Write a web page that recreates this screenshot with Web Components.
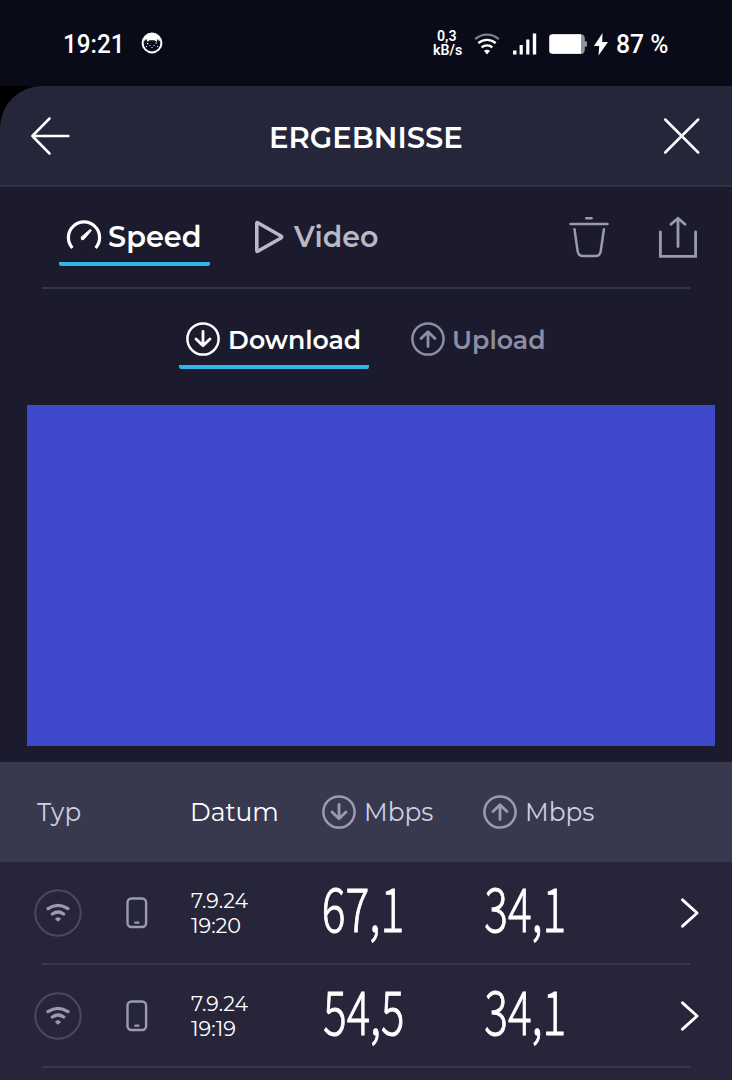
<!DOCTYPE html>
<html lang="de">
<head>
<meta charset="utf-8">
<meta name="viewport" content="width=device-width">
<title>Ergebnisse</title>
<style>
  body {
    margin: 0;
    background: #1b1b2d;
    font-family: Montserrat, Inter, sans-serif;
    color: #fff;
  }
</style>
</head>
<body>
<results-app></results-app>

<script>
const ICONS = {
  cat: [22, 22, `<circle cx="11" cy="11" r="9.4" fill="none" stroke="currentColor" stroke-width="2"/>
    <path fill="currentColor" d="M3 8C4 3 8 1 11 1s7 2 8 7l-1 1.5c-.5-1.5-.8-2-1.5-2.500L15.500 10 13.500 8.300h-5L6.500 10 5.500 7C4.500 7.500 4 8 4 9.500z"/>
    <path fill="currentColor" d="M6 11h1.200v1.200H6zM14.500 10.500h1.200v1.200h-1.200zM8.500 13h1v1h-1zM12.500 13h1v1h-1zM5 14h1v1H5zM16 14h1v1h-1zM10.500 15h1v1h-1z"/>`],
  signalWifi: [26, 22, `<g fill="none" stroke="currentColor" stroke-width="2.300">
    <path stroke="#7d7d88" d="M1.200 6.200a17.500 17.500 0 0 1 23.600 0"/>
    <path d="M4.300 10.200a13 13 0 0 1 17.400 0"/><path d="M7.600 14.300a8.300 8.300 0 0 1 10.800 0"/></g>
    <path fill="currentColor" d="M10 17.800q3-2.200 6 0L13 21.500z"/>`],
  bars: [24, 22, `<path fill="currentColor" d="M0 17.500h3.500V21.500H0zM6.600 12h3.200v9.500H6.600zM13.200 6.500h3.200v15h-3.200zM19.800.5h3.400v21h-3.400z"/>`],
  battery: [38, 20, `<path fill="#92929b" d="M3 .2h29q3.500 0 3.800 4v3h1.200q1 0 1 1v3.600q0 1-1 1h-1.200v3q-.3 4.200-3.800 4.200H3z"/>
    <path fill="currentColor" d="M3.500.2H32v19.600H3.500Q.2 19.800.2 16.500v-13Q.2.2 3.500.2z"/>`],
  bolt: [14, 23, `<path fill="currentColor" d="M8.500 0 0 13h5.200L4.500 22.500 14 9H8.200z"/>`],
  back: [40, 40, `<path fill="none" stroke="currentColor" stroke-width="2.500" stroke-linecap="round" stroke-linejoin="round" d="M19.500 2.500 2.300 20l17.200 17.500M2.300 20H38.400"/>`],
  close: [38, 38, `<path fill="none" stroke="currentColor" stroke-width="2.500" stroke-linecap="round" d="m2.200 2.500 33 33M35.200 2.500l-33 33"/>`],
  gauge: [36, 32, `<path fill="none" stroke="currentColor" stroke-width="3.200" d="M6.400 29A15.600 15.600 0 1 1 29.600 29"/>
    <path fill="currentColor" stroke="currentColor" stroke-linejoin="round" d="m15 18.300 9.200-7.900 1.200 1.200-7.600 8.800-2 .4z"/>`],
  play: [30, 34, `<path fill="none" stroke="currentColor" stroke-width="3.600" stroke-linejoin="round" d="M2.800 3.300v27.400q0 1 1 .5L27 18q1.400-1 0-2L3.800 2.800q-1-.5-1 .5z"/>`],
  trash: [40, 42, `<g fill="none" stroke="currentColor" stroke-width="2.500" stroke-linecap="round" stroke-linejoin="round">
    <path d="M17.200 2.300h5.400M1.500 8h37M5.500 13.200l3.200 22.300q1 4.500 5 4.500h13q4 0 5-4.500l3.200-22.300"/></g>`],
  share: [40, 42, `<path fill="none" stroke="currentColor" stroke-width="2.800" stroke-linecap="round" d="M2.400 16v24.300h35.200V16M20 30.500V2.500M13 8.300l7-6 7 6"/>`],
  down: [34, 34, `<g fill="none" stroke="currentColor" stroke-width="2.500" stroke-linecap="round" stroke-linejoin="round">
    <circle cx="17" cy="17" r="15.600"/><path d="M17 9.500v14M10 17l7 6.700 7-6.700" stroke-width="2.800"/></g>`],
  up: [34, 34, `<g fill="none" stroke="currentColor" stroke-width="2.500" stroke-linecap="round" stroke-linejoin="round">
    <circle cx="17" cy="17" r="15.600"/><path d="M17 24.500v-14M10 16.500l7-6.700 7 6.700" stroke-width="2.800"/></g>`],
  wifi: [48, 48, `<circle cx="24" cy="24" r="22.700" fill="none" stroke="#4b495f" stroke-width="2"/>
    <g fill="none" stroke="currentColor" stroke-width="3.200" stroke-linecap="round">
    <path d="M14 19.700q10-6.700 20 0M18.300 25q5.700-4 11.400 0"/></g>
    <path fill="currentColor" d="M21.400 29.200q2.600-1.700 5.200 0v1.300L24 32.800l-2.600-2.300z"/>`],
  phone: [22, 32, `<rect x="1.500" y="1.500" width="18.600" height="28.500" rx="4" fill="none" stroke="currentColor" stroke-width="2.400"/>
    <path stroke="currentColor" stroke-width="2.200" stroke-linecap="round" d="M9.300 25.700h3.200"/>`],
  chevron: [20, 32, `<path fill="none" stroke="currentColor" stroke-width="2.900" stroke-linecap="round" stroke-linejoin="round" d="M2.500 2.800 17.100 16 2.500 29.200"/>`],
};

// <app-icon name="up">
class AppIcon extends HTMLElement {
  connectedCallback() {
    const [w, h, body] = ICONS[this.getAttribute('name')];
    this.attachShadow({ mode: 'open' }).innerHTML = `
      <style>
        :host { display: block; flex: none; width: ${w}px; height: ${h}px; }
        svg { display: block; }
      </style>
      <svg width="${w}" height="${h}" viewBox="0 0 ${w} ${h}">${body}</svg>
    `;
  }
}

// One line of text whose visible glyphs span exactly `width` pixels
class FitText extends HTMLElement {
  connectedCallback() {
    const width = Number(this.getAttribute('width'));
    const text = this.getAttribute('text');
    const shadow = this.attachShadow({ mode: 'open' });
    shadow.innerHTML = `
      <style>
        :host { display: block; flex: none; width: ${width}px; }
        span { display: block; width: max-content; white-space: pre; transform-origin: 0 50%; }
      </style>
      <span></span>
    `;
    const span = shadow.querySelector('span');
    span.textContent = text;
    const style = getComputedStyle(this);
    const ctx = document.createElement('canvas').getContext('2d');
    ctx.font = `${style.fontWeight} ${style.fontSize} ${style.fontFamily}`;
    const box = ctx.measureText(text);
    // the canvas may kern differently, so scale by the laid-out advance
    const advance = span.getBoundingClientRect().width;
    const left = -box.actualBoundingBoxLeft;
    const right = box.width - box.actualBoundingBoxRight;
    const scale = width / (advance - left - right);
    span.style.transform = `translateX(${-left * scale}px) scaleX(${scale})`;
  }
}

class StatusBar extends HTMLElement {
  connectedCallback() {
    this.attachShadow({ mode: 'open' }).innerHTML = `
      <style>
        :host {
          display: flex; align-items: center; box-sizing: border-box;
          height: 86px; padding: 2px 64px 0 65px;
          background: #0a0b19; font: 500 25px/30px Roboto, sans-serif;
        }
        .text { margin-top: 1.5px; }
        .cat { margin: -2px 0 0 20.500px; }
        .right { display: flex; align-items: center; margin-left: auto; }
        .rate {
          display: flex; flex-direction: column; align-items: center; gap: 3px;
          margin: -1px 12.500px 0 0; font-size: 14px; font-weight: 600; line-height: 11px;
        }
        .signal { margin-top: -1px; }
        .bars { margin: -1px 12px 0 13px; }
        .bolt { margin: 0 9px 0 7px; }
      </style>
      <fit-text class="text" text="19:21" width="55.5"></fit-text>
      <app-icon class="cat" name="cat"></app-icon>
      <div class="right">
        <div class="rate">
          <fit-text text="0,3" width="19.5"></fit-text>
          <fit-text text="kB/s" width="29"></fit-text>
        </div>
        <app-icon class="signal" name="signalWifi"></app-icon>
        <app-icon class="bars" name="bars"></app-icon>
        <app-icon name="battery"></app-icon>
        <app-icon class="bolt" name="bolt"></app-icon>
        <fit-text class="text" text="87 %" width="51"></fit-text>
      </div>
    `;
  }
}

class PageHeader extends HTMLElement {
  connectedCallback() {
    this.attachShadow({ mode: 'open' }).innerHTML = `
      <style>
        :host { display: block; background: #000; }
        header {
          display: flex; align-items: center; justify-content: space-between;
          box-sizing: border-box; height: 101px; padding: 0 31px 0 29.500px;
          background: #26263a; border-bottom: 2px solid #2f2f43;
          border-top-left-radius: 42px;
          font-size: 29.5px; font-weight: 600; line-height: 34px;
        }
        fit-text { margin-top: 3px; }
      </style>
      <header>
        <app-icon name="back"></app-icon>
        <fit-text text="${this.getAttribute('heading')}" width="191"></fit-text>
        <app-icon name="close"></app-icon>
      </header>
    `;
  }
}

// Icon and label, underlined when active
class TabItem extends HTMLElement {
  connectedCallback() {
    this.attachShadow({ mode: 'open' }).innerHTML = `
      <style>
        :host {
          display: flex; align-items: center; gap: 9px;
          box-sizing: border-box; padding: 0 8px;
        }
        :host([active]) {
          background: linear-gradient(#31b4ec, #31b4ec) bottom / 100% 4px no-repeat;
          border-radius: 2px;
        }
      </style>
      <slot></slot>
    `;
  }
}

class ResultRow extends HTMLElement {
  connectedCallback() {
    const { date, time, down, downWidth, up, timeWidth } = this.dataset;
    this.attachShadow({ mode: 'open' }).innerHTML = `
      <style>
        :host {
          display: grid; grid-template-columns: 90px 67px 133px 161px 1fr auto;
          align-items: center; box-sizing: border-box; height: 103px;
          padding: 0 32px 2px 34px;
          background: linear-gradient(#38374c, #38374c) 42px 100% / 648px 2px no-repeat #27253a;
        }
        app-icon { color: #9b9ab1; }
        .go { color: #fff; }
        .date { font-size: 21.2px; line-height: 25.5px; padding-top: 1px; }
        .speed {
          margin-top: -14px;
          font: 300 61px/70px "Noto Sans CJK JP", sans-serif;
          -webkit-text-stroke: 1px #fff;
        }
      </style>
      <app-icon name="wifi"></app-icon>
      <app-icon name="phone" style="margin-left: 2px"></app-icon>
      <div class="date">
        <fit-text text="${date}" width="57"></fit-text>
        <fit-text text="${time}" width="${timeWidth}"></fit-text>
      </div>
      <fit-text class="speed" text="${down}" width="${downWidth}"></fit-text>
      <fit-text class="speed" text="${up}" width="78.5"></fit-text>
      <app-icon class="go" name="chevron"></app-icon>
    `;
  }
}

class ResultsApp extends HTMLElement {
  connectedCallback() {
    this.attachShadow({ mode: 'open' }).innerHTML = `
      <style>
        :host { display: flex; flex-direction: column; height: 1080px; overflow: hidden; }
        :host > * { flex: none; }
        .tabs {
          display: flex; box-sizing: border-box; height: 102px; margin: 0 42px;
          padding: 21px 0 0 17px; border-bottom: 2px solid #34344a;
          font-size: 30px; font-weight: 600; line-height: 36px;
        }
        .tabs tab-item { height: 58px; }
        .gauge { margin: 0 -2px 4px -1px; }
        .video { margin-left: 36px; color: #b9b8c6; }
        .tools { display: flex; gap: 49px; margin: 8px -8px 0 auto; color: #9a99b0; }
        .modes {
          display: flex; box-sizing: border-box; height: 116px; padding: 20px 0 0 178.500px;
          font-size: 26.500px; font-weight: 600; line-height: 32px;
        }
        .modes tab-item { height: 60px; }
        .modes fit-text { margin: 1px 0 0 .5px; }
        .upload { margin-left: 34px; color: #8e8da5; }
        .chart { height: 341px; margin: 0 17.500px 16px 27px; background: #4048cc; }
        .head {
          display: grid; grid-template-columns: 155px 129.500px 161.500px auto;
          align-items: center; height: 100px; padding-left: 37px;
          background: #38394f; color: #d0cfe2;
          font-size: 25.3px; font-weight: 400; line-height: 30px;
        }
        .unit { display: flex; align-items: center; gap: 10px; }
        .unit app-icon { color: #9b9ab1; }
        .sorted { color: #fff; }
      </style>
      <status-bar></status-bar>
      <page-header heading="ERGEBNISSE"></page-header>
      <div class="tabs">
        <tab-item active style="width: 151px">
          <app-icon class="gauge" name="gauge"></app-icon>
          <fit-text text="Speed" width="91"></fit-text>
        </tab-item>
        <tab-item class="video">
          <app-icon name="play"></app-icon>
          <fit-text text="Video" width="85"></fit-text>
        </tab-item>
        <div class="tools">
          <app-icon name="trash"></app-icon>
          <app-icon name="share"></app-icon>
        </div>
      </div>
      <div class="modes">
        <tab-item active style="width: 190px">
          <app-icon name="down" style="margin-left: -.5px"></app-icon>
          <fit-text text="Download" width="129"></fit-text>
        </tab-item>
        <tab-item class="upload">
          <app-icon name="up"></app-icon>
          <fit-text text="Upload" width="89.5"></fit-text>
        </tab-item>
      </div>
      <div class="chart"></div>
      <div class="head">
        <fit-text text="Typ" width="43"></fit-text>
        <fit-text class="sorted" text="Datum" width="85"></fit-text>
        <div class="unit"><app-icon name="down"></app-icon><fit-text text="Mbps" width="67"></fit-text></div>
        <div class="unit"><app-icon name="up"></app-icon><fit-text text="Mbps" width="67"></fit-text></div>
      </div>
      <result-row data-date="7.9.24" data-time="19:20" data-time-width="49" data-down="67,1" data-down-width="77.5" data-up="34,1"></result-row>
      <result-row data-date="7.9.24" data-time="19:19" data-time-width="44" data-down="54,5" data-down-width="78.5" data-up="34,1"></result-row>
      <div style="flex: 1; background: #27253a"></div>
    `;
  }
}

customElements.define('app-icon', AppIcon);
customElements.define('fit-text', FitText);
customElements.define('status-bar', StatusBar);
customElements.define('page-header', PageHeader);
customElements.define('tab-item', TabItem);
customElements.define('result-row', ResultRow);
customElements.define('results-app', ResultsApp);
</script>
</body>
</html>
